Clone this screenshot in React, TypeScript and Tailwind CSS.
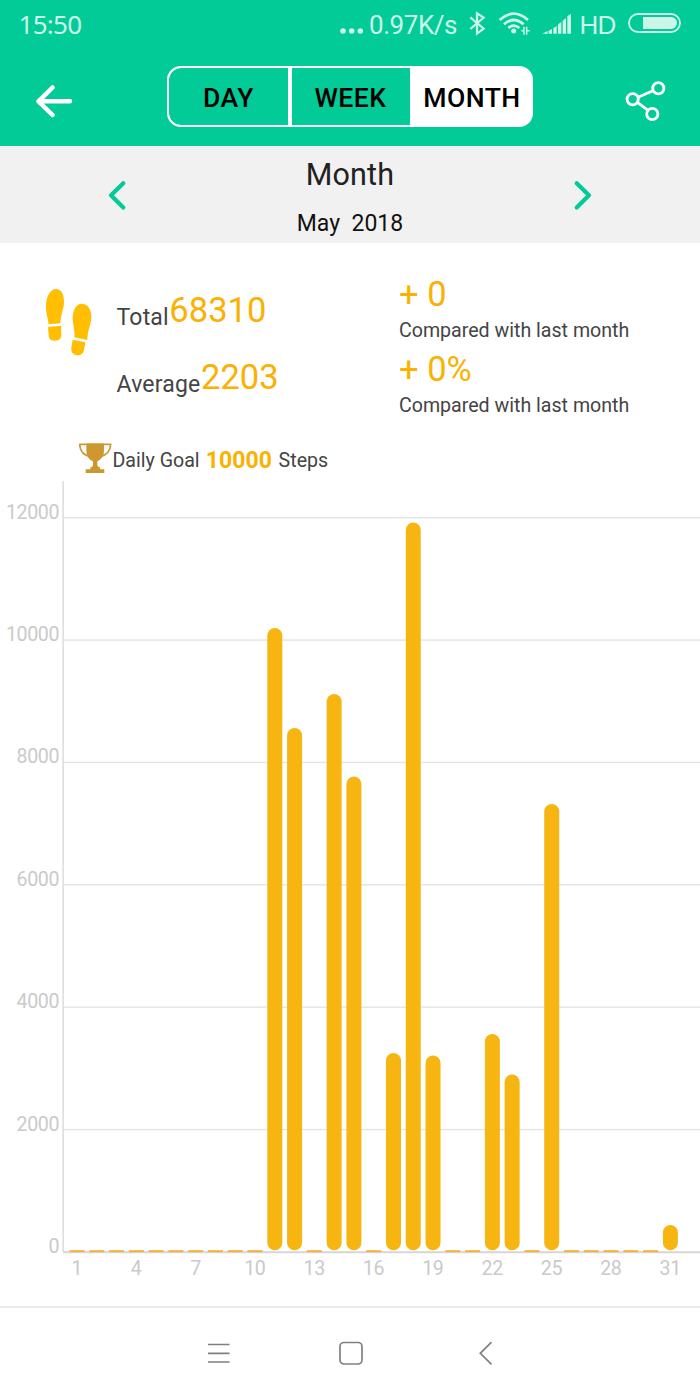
import React from "react";

const bars: Record<number, number> = {
  11: 628, 12: 728, 14: 694, 15: 776.5, 17: 1053, 18: 522.5,
  19: 1055.5, 22: 1034, 23: 1074.5, 25: 804, 31: 1225,
};
const days = Array.from({ length: 31 }, (_, i) => i + 1);
const ticks = [12000, 10000, 8000, 6000, 4000, 2000, 0];

function StatusBar() {
  return (
    <div className="flex h-[50px] items-start pl-[18.5px] font-['Noto_Sans',sans-serif] text-[26px] leading-[50px] text-[#ccf5ea]">
      <span className="w-[321px] leading-[48px] tracking-[-0.7px]">15:50</span>
      <svg className="mt-[28px] h-[6px] w-[24px] shrink-0" viewBox="0 0 24 6" fill="currentColor">
        <circle cx="3" cy="3" r="2.8" />
        <circle cx="11.7" cy="3" r="2.8" />
        <circle cx="20.3" cy="3" r="2.8" />
      </svg>
      <span className="ml-[5.5px] w-[100px] font-['Roboto',sans-serif] text-[26px] tracking-[-0.45px]">0.97K/s</span>
      <svg className="mt-[11px] h-[25px] w-[17px] shrink-0" viewBox="419 33 51 75" fill="none" stroke="currentColor" strokeWidth="6.5">
        <path d="M423 52 L463 86 L443 101 L443 40 L463 53 L423 87" />
      </svg>
      <svg className="ml-[13px] mt-[11px] h-[25px] w-[31px] shrink-0" viewBox="507 33 93 75" fill="none" stroke="currentColor" strokeWidth="8">
        <path d="M509 60 Q551 22 594 60 M522 73 Q551 47 581 73 M535 84 Q551 70 568 84" />
        <circle cx="551" cy="93" r="7.5" fill="currentColor" stroke="none" />
        <path d="M582 80 V104 M590 80 V104" strokeWidth="4.5" />
        <path d="M574 92 H582 M590 92 H599" strokeWidth="4.5" />
      </svg>
      <svg className="ml-[12px] mt-[13px] h-[21px] w-[30px] shrink-0" viewBox="636 39 90 63" fill="currentColor">
        <path d="M637 101 L653 93 V101Z M656 92 L666 87 V101 H656Z M670 85 L680 78 V101 H670Z M684 73 L694 66 V101 H684Z M698 62 L708 55 V101 H698Z M712 49 L723 41 V101 H712Z" />
      </svg>
      <span className="ml-[7.5px] w-[48px] font-['Liberation_Sans',sans-serif] text-[26px] tracking-[-0.8px]">HD</span>
      <svg className="mt-[13px] h-[20px] w-[53px] shrink-0" viewBox="0 0 53 20">
        <rect x="1" y="1" width="51" height="18" rx="9" fill="none" stroke="currentColor" strokeWidth="1.8" />
        <path d="M15 4 H43 a6 6 0 0 1 0 12 H15Z" fill="currentColor" />
      </svg>
    </div>
  );
}

function Header() {
  return (
    <header className="h-[145.5px] bg-[#02cb97]">
      <StatusBar />
      <div className="flex items-start pt-4">
        <svg className="ml-[35px] mt-[18px] h-[34px] w-[39px]" viewBox="0 0 39 34" fill="none" stroke="white" strokeWidth="4.5" strokeLinecap="round" strokeLinejoin="round">
          <path d="M17.5 3.5 L3.5 17.3 L17.5 31 M4 17.3 H35" />
        </svg>
        <div className="ml-[93px] flex h-[60.5px] w-[366px] overflow-hidden rounded-[14px] border-2 border-white bg-white text-[26.6px] font-medium leading-[59px] tracking-[0.45px] text-black">
          <div className="w-[119px] rounded-l-[12px] bg-[#02cb97] text-center">DAY</div>
          <div className="ml-[4px] w-[118px] bg-[#02cb97] pr-[1px] text-center">WEEK</div>
          <div className="flex-1 bg-white pl-[3px] text-center">MONTH</div>
        </div>
        <svg className="ml-[92px] mt-[14px] h-[42px] w-[42px]" viewBox="0 0 42 42" fill="none" stroke="white" strokeWidth="2.8">
          <circle cx="7.7" cy="19.3" r="5.6" />
          <circle cx="33.3" cy="8.3" r="5.6" />
          <circle cx="27.3" cy="34" r="5.6" />
          <path d="M13 17.2 L28 10.8 M12.3 22.4 L22.8 30.2" />
        </svg>
      </div>
    </header>
  );
}

function Period() {
  return (
    <section className="flex h-[97.5px] justify-between bg-[#f1f1f1] px-[107px]">
      <svg className="mt-[33px] h-[32px] w-[20px]" viewBox="0 0 20 32" fill="none" stroke="#02cb97" strokeWidth="4.2" strokeLinecap="round" strokeLinejoin="round">
        <path d="M16.3 4.2 L4 16.3 L16.3 28.5" />
      </svg>
      <div className="flex flex-col items-center text-center">
        <div className="mt-[9px] h-10 text-[30.5px] leading-[40px] tracking-[0.2px] text-[#212121]">Month</div>
        <div className="mt-[14px] whitespace-pre text-[23px] leading-[30px] text-[#111]">May  2018</div>
      </div>
      <svg className="mt-[33px] h-[32px] w-[20px]" viewBox="0 0 20 32" fill="none" stroke="#02cb97" strokeWidth="4.2" strokeLinecap="round" strokeLinejoin="round">
        <path d="M3.7 4.2 L16 16.3 L3.7 28.5" />
      </svg>
    </section>
  );
}

function Change({ value }: { value: string }) {
  return (
    <div className="h-[75px]">
      <div className="h-10 text-[34.5px] leading-[40px] text-[#fab103]">{value}</div>
      <div className="mt-[4px] text-[19.6px] leading-[26px] text-[#444]">Compared with last month</div>
    </div>
  );
}

function Stat({ label, value }: { label: string; value: string }) {
  return (
    <div className="flex h-[67px] items-start">
      <span className="mt-[13px] text-[23px] leading-[30px] tracking-[0.2px] text-[#444]">{label}</span>
      <span className="ml-[0.5px] text-[34.5px] leading-[40px] text-[#fab103]">{value}</span>
    </div>
  );
}

function Summary() {
  return (
    <section className="h-[238px]">
      <div className="flex h-[199px] items-start pl-[45.5px] pt-[31px]">
        <svg className="mt-[13.5px] h-[68px] w-[46px]" viewBox="78 52 138 204" fill="#ffbf00">
          <path d="M108 55 C123 55 132 70 132 93 C132 115 122 130 121 158 L86 161 C84 139 77 129 78 105 C79 75 92 55 108 55Z" />
          <path d="M84 169 L123 165 L124 192 C124 204 117 209 106 210 C92 210 86 204 86 192Z" />
          <path d="M187 99 C204 100 215 118 214 140 C213 165 203 175 202 208 L163 200 C166 180 157 160 158 140 C160 115 170 98 187 99Z" />
          <path d="M158 207 L196 215 L192 238 C189 250 182 255 172 254 C158 252 153 245 154 232Z" />
        </svg>
        <div className="ml-[25px] mt-4 w-[282.5px]">
          <Stat label="Total" value="68310" />
          <Stat label="Average" value="2203" />
        </div>
        <div>
          <Change value="+ 0" />
          <Change value="+ 0%" />
        </div>
      </div>
      <div className="flex h-[36px] items-start pl-[79px] text-[19.6px] leading-[38px] text-[#444]">
        <svg className="mt-[1px] h-[31px] w-[33px]" viewBox="28 26 99 93" fill="#cc982f">
          <path d="M50 27 H103 V47 C103 70 91 76 83 81 V93 L89 101 H65 L70 93 V81 C61 76 50 70 50 47Z" />
          <path d="M48 105 H104 V116 H48Z M62 99 H91 V106 H62Z" />
          <path d="M51 30 H30 C31 52 42 63 62 67 M102 30 H123 C122 52 111 63 91 67" fill="none" stroke="#cc982f" strokeWidth="5" />
        </svg>
        <span className="ml-[0.5px]">Daily Goal</span>
        <b className="ml-[6px] text-[23px] font-bold tracking-[0.1px] text-[#fab103]">10000</b>
        <span className="ml-[6.5px]">Steps</span>
      </div>
    </section>
  );
}

function Chart() {
  return (
    <svg className="block h-[825px] w-[700px]" viewBox="0 481 700 825" fontSize="19.6" fill="#cacaca">
      {ticks.map((t, i) => (
        <g key={t}>
          <rect x="63" y={517 + i * 122.37} width="637" height={t ? 1.4 : 2} fill={t ? "#e4e4e4" : "#d6d6d6"} />
          <text x="59.2" y={518.7 + i * 122.37} textAnchor="end" letterSpacing="-0.35">{t}</text>
        </g>
      ))}
      <rect x="62.3" y="481" width="1.7" height="771" fill="#e0e0e0" />
      {days.map((d) => {
        const x = 69.5 + (d - 1) * 19.78;
        const top = bars[d];
        return (
          <g key={d}>
            {top ? (
              <rect x={x} y={top} width="15" height={1250.3 - top} rx="7.5" fill="#f7b512" />
            ) : (
              <rect x={x} y="1250.2" width="15" height="1.9" fill="#f7b032" />
            )}
            {d % 3 === 1 && <text x={x + 7.3} y="1275" textAnchor="middle" letterSpacing="-0.35">{d}</text>}
          </g>
        );
      })}
    </svg>
  );
}

function NavBar() {
  return (
    <nav className="flex h-[94px] items-start border-t-2 border-[#ececec] pl-[208px] pt-[33px] text-[#808080]">
      <svg className="h-[26px] w-[22px]" viewBox="0 0 22 26" fill="none" stroke="currentColor" strokeWidth="1.7">
        <path d="M0 3.5 H21.5 M0 12.3 H21.5 M0 21 H21.5" />
      </svg>
      <svg className="ml-[108px] h-[26px] w-[26px]" viewBox="0 0 26 26" fill="none" stroke="currentColor" strokeWidth="1.7">
        <rect x="2" y="1.5" width="22" height="21.5" rx="4" />
      </svg>
      <svg className="ml-[114px] h-[26px] w-[16px]" viewBox="0 0 16 26" fill="none" stroke="currentColor" strokeWidth="1.7">
        <path d="M13.5 1.2 L2.3 12.3 L13.5 23.3" />
      </svg>
    </nav>
  );
}

export default function App() {
  return (
    <main className="h-[1400px] w-[700px] overflow-hidden bg-white font-['Roboto',sans-serif]">
      <Header />
      <Period />
      <Summary />
      <Chart />
      <NavBar />
    </main>
  );
}
